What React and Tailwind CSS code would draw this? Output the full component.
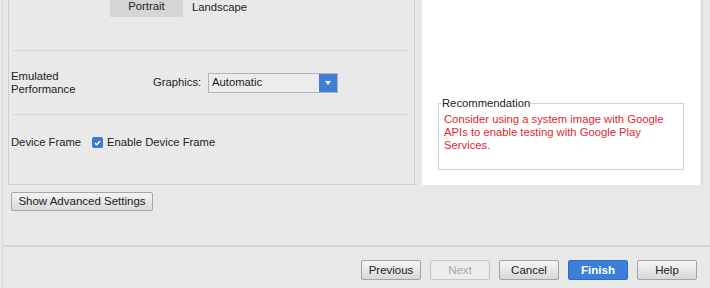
export default function App() {
  const font = { fontFamily: '"Liberation Sans", Arial, sans-serif' };

  return (
    <div
      style={font}
      className="w-[710px] h-[288px] overflow-hidden bg-[#e8e8e8] text-[11.25px] text-[#222] flex"
    >
      <div className="w-[2px] shrink-0" />
      <div className="w-px shrink-0 bg-[#dadada]" />

      <div className="flex-1 flex flex-col">
        {/* top: settings panel + preview panel */}
        <div className="flex h-[185px]">
          <div className="ml-[5px] w-[407px] border border-t-0 border-[#cfcfcf] bg-[#e9e9e9] flex flex-col">
            {/* orientation */}
            <div className="h-[50px] flex items-start">
              <div className="ml-[101px] w-[73px] h-[17px] bg-[#d5d5d5] flex items-center justify-center leading-[13px] pb-[5px]">
                Portrait
              </div>
              <div className="ml-[9px] leading-[13px] pt-px">Landscape</div>
            </div>
            <div className="ml-[4px] mr-[6px] h-px bg-[#d6d6d6]" />

            {/* emulated performance */}
            <div className="h-[63px] flex items-center">
              <div className="ml-[2px] w-[142px] leading-[13px] pt-px">
                Emulated
                <br />
                Performance
              </div>
              <div className="w-[55px] leading-[13px]">Graphics:</div>
              <div className="w-[130px] h-[20px] flex border border-[#b3b3b3] bg-[#ececec]">
                <div className="flex-1 pl-[3px] flex items-center leading-[13px]">Automatic</div>
                <div className="w-[18px] bg-[#3d7fd6] flex items-center justify-center">
                  <svg width="6" height="4" viewBox="0 0 6 4">
                    <path d="M0 0 L6 0 L3 4 Z" fill="#fff" />
                  </svg>
                </div>
              </div>
            </div>
            <div className="ml-[4px] mr-[6px] h-px bg-[#d6d6d6]" />

            {/* device frame */}
            <div className="h-[55px] flex items-center">
              <div className="ml-[2px] w-[81px] leading-[13px]">Device Frame</div>
              <div className="w-[11px] h-[11px] rounded-[2px] bg-[#3b7ad2] flex items-center justify-center">
                <svg width="7" height="6" viewBox="0 0 7 6">
                  <path d="M1 3 L2.8 4.8 L6 1" stroke="#fff" strokeWidth="1.4" fill="none" />
                </svg>
              </div>
              <div className="ml-[4px] leading-[13px]">Enable Device Frame</div>
            </div>
          </div>

          {/* preview */}
          <div className="ml-[7px] w-[278px] bg-white">
            <fieldset className="ml-[16px] mt-[97px] w-[246px] h-[73px] border border-[#cdd3dd] pl-[3px]">
              <legend className="leading-[13px] text-[#222]">Recommendation</legend>
              <p className="pl-[2px] pt-[3px] leading-[13px] text-[#e3262d] whitespace-nowrap">
                Consider using a system image with Google
                <br />
                APIs to enable testing with Google Play
                <br />
                Services.
              </p>
            </fieldset>
          </div>
          <div className="ml-[2px] w-px bg-[#d8d8d8]" />
        </div>

        {/* advanced */}
        <div className="mt-[7px] ml-[8px]">
          <button className="w-[142px] h-[19px] border border-[#a6a6a6] rounded-[2px] bg-gradient-to-b from-[#f4f4f4] to-[#d9d9d9] leading-[13px] text-[11.5px] text-[#222]">
            Show Advanced Settings
          </button>
        </div>

        <div className="mt-[34px] h-[2px] bg-[#d6d6d6]" />

        {/* footer buttons */}
        <div className="mt-[13px] flex justify-end gap-[9px] pr-[13px]">
          <FooterButton label="Previous" />
          <FooterButton label="Next" disabled />
          <FooterButton label="Cancel" />
          <button className="w-[60px] h-[20px] rounded-[2px] border border-[#2f6cc0] bg-[#3b7fd8] text-white font-bold text-[11.5px] leading-[13px]">
            Finish
          </button>
          <FooterButton label="Help" />
        </div>
      </div>
    </div>
  );
}

function FooterButton({ label, disabled }) {
  if (disabled) {
    return (
      <button className="w-[60px] h-[20px] rounded-[2px] border border-[#c6c6c6] bg-[#ececec] text-[#a9a9a9] text-[11.5px] leading-[13px]">
        {label}
      </button>
    );
  }
  return (
    <button className="w-[60px] h-[20px] rounded-[2px] border border-[#a3a3a3] bg-gradient-to-b from-[#f5f5f5] to-[#d8d8d8] text-[#222] text-[11.5px] leading-[13px]">
      {label}
    </button>
  );
}
